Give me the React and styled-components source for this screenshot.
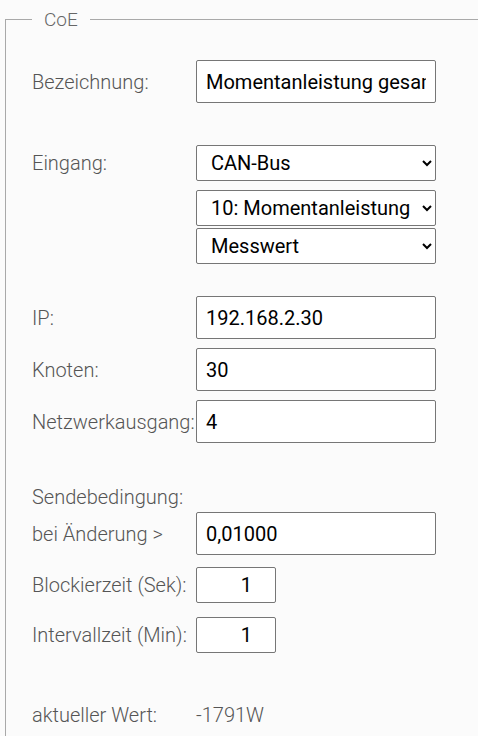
import React from 'react';
import styled, { createGlobalStyle } from 'styled-components';

const GlobalStyle = createGlobalStyle`
  html, body {
    margin: 0;
    background: #fbfbfb;
    font-family: Roboto, "Liberation Sans", sans-serif;
  }
`

const Frame = styled.fieldset`
  margin: 8px 0 0 5px;
  padding: 0 0 40px 26px;
  border: 1px solid #a9a9a9;
  border-right: none;
  min-width: 0;
`

const Legend = styled.legend`
  padding: 0 12px;
  font-size: 19px;
  font-weight: 300;
  color: #666;
`

const Section = styled.div`
  display: flex;
  flex-direction: column;
  gap: ${({ gap }) => gap || 9}px;
  margin-top: ${({ top }) => top}px;
`

const Row = styled.div`
  display: grid;
  grid-template-columns: 164px 240px;
  align-items: center;
`

const Label = styled.span`
  font-size: 20px;
  font-weight: 300;
  color: #555;
  white-space: nowrap;
`

const TextInput = styled.input`
  box-sizing: border-box;
  width: ${({ small }) => (small ? 80 : 240)}px;
  height: ${({ small }) => (small ? 36 : 43)}px;
  padding: ${({ small }) => (small ? '0 23px 0 9px' : '0 9px')};
  text-align: ${({ small }) => (small ? 'right' : 'left')};
  border: 1px solid #767676;
  border-radius: 2px;
  background: #fff;
  font-family: Roboto, "Liberation Sans", sans-serif;
  font-size: 20px;
  color: #000;
  outline: none;
`

const Select = styled.select`
  box-sizing: border-box;
  width: 240px;
  height: 36px;
  padding: 0 4px 0 10px;
  border: 1px solid #767676;
  border-radius: 2px;
  background: #fff;
  font-family: Roboto, "Liberation Sans", sans-serif;
  font-size: 20px;
  color: #000;
`

const Stack = styled.div`
  display: flex;
  flex-direction: column;
  gap: ${({ gap }) => gap}px;
`

const Value = styled.span`
  font-size: 20px;
  font-weight: 300;
  color: #555;
`

const App = () => {
  return (
    <>
      <GlobalStyle />
      <Frame>
        <Legend>CoE</Legend>

        <Section top={29}>
          <Row>
            <Label>Bezeichnung:</Label>
            <TextInput defaultValue="Momentanleistung gesamt" />
          </Row>
        </Section>

        <Section top={42}>
          <Row>
            <Label>Eingang:</Label>
            <Select defaultValue="can">
              <option value="can">CAN-Bus</option>
            </Select>
          </Row>
          <Row>
            <span />
            <Stack gap={2}>
              <Select defaultValue="10">
                <option value="10">10: Momentanleistung gesamt</option>
              </Select>
              <Select defaultValue="mw">
                <option value="mw">Messwert</option>
              </Select>
            </Stack>
          </Row>
        </Section>

        <Section top={32} gap={9}>
          <Row>
            <Label>IP:</Label>
            <TextInput defaultValue="192.168.2.30" />
          </Row>
          <Row>
            <Label>Knoten:</Label>
            <TextInput defaultValue="30" />
          </Row>
          <Row>
            <Label>Netzwerkausgang:</Label>
            <TextInput defaultValue="4" />
          </Row>
        </Section>

        <Section top={42} gap={3}>
          <Row>
            <Label>Sendebedingung:</Label>
          </Row>
          <Row>
            <Label>bei Änderung &gt;</Label>
            <TextInput defaultValue="0,01000" />
          </Row>
        </Section>

        <Section top={12} gap={14}>
          <Row>
            <Label>Blockierzeit (Sek):</Label>
            <TextInput small defaultValue="1" />
          </Row>
          <Row>
            <Label>Intervallzeit (Min):</Label>
            <TextInput small defaultValue="1" />
          </Row>
        </Section>

        <Section top={50}>
          <Row>
            <Label>aktueller Wert:</Label>
            <Value>-1791W</Value>
          </Row>
        </Section>
      </Frame>
    </>
  );
};

export default App;
